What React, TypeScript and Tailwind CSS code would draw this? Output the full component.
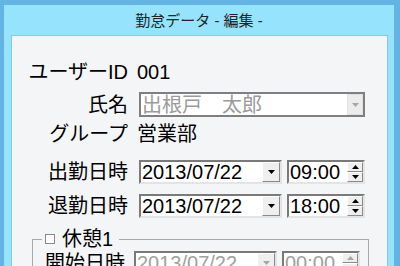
import React from 'react';

const FONT = { fontFamily: '"Liberation Sans", "Noto Sans CJK JP", sans-serif' };

interface BoxProps {
  value: string;
  disabled?: boolean;
  className?: string;
}

const Triangle: React.FC<{ up?: boolean; grey?: boolean }> = ({ up, grey }) => (
  <svg width="7" height="4" viewBox="0 0 7 4">
    <path d={up ? 'M0 4 L3.5 0 L7 4 Z' : 'M0 0 L7 0 L3.5 4 Z'} fill={grey ? '#a6a6a6' : '#000'} />
  </svg>
);

const DateBox: React.FC<BoxProps> = ({ value, disabled }) => (
  <div className="flex items-center w-[143px] h-[24px] bg-white border-2 border-t-[#7a7a7a] border-l-[#7a7a7a] border-b-[#e4e4e4] border-r-[#e4e4e4]">
    <span className={`flex-1 pl-[1px] text-[20px] leading-[20px] ${disabled ? 'text-[#a0a0a0]' : 'text-black'}`}>{value}</span>
    <div className="w-[18px] h-[20px] flex items-center justify-center bg-[#efefef] border border-t-white border-l-white border-b-[#8a8a8a] border-r-[#8a8a8a]">
      <Triangle grey={disabled} />
    </div>
  </div>
);

const TimeBox: React.FC<BoxProps> = ({ value, disabled }) => (
  <div className="flex items-center w-[78px] h-[24px] bg-white border-2 border-t-[#7a7a7a] border-l-[#7a7a7a] border-b-[#e4e4e4] border-r-[#e4e4e4]">
    <span className={`flex-1 pl-[1px] text-[20px] leading-[20px] ${disabled ? 'text-[#a0a0a0]' : 'text-black'}`}>{value}</span>
    <div className="w-[16px] h-[20px] flex flex-col">
      <div className="h-[10px] flex items-center justify-center bg-[#efefef] border border-t-white border-l-white border-b-[#8a8a8a] border-r-[#8a8a8a]">
        <Triangle up grey={disabled} />
      </div>
      <div className="h-[10px] flex items-center justify-center bg-[#efefef] border border-t-white border-l-white border-b-[#8a8a8a] border-r-[#8a8a8a]">
        <Triangle grey={disabled} />
      </div>
    </div>
  </div>
);

const Label: React.FC<{ children: React.ReactNode }> = ({ children }) => (
  <div className="w-[116px] text-right text-[20px] leading-[24px] text-black whitespace-nowrap">{children}</div>
);

export default function App() {
  return (
    <div className="w-[400px] h-[266px] overflow-hidden bg-[#63b3e5] pt-[5px] pl-[4px] pr-[6px]" style={FONT}>
      <div className="h-[261px] bg-[#95e3fd] flex flex-col">
        <div className="h-[30px] shrink-0 pt-[3px] flex items-center justify-center text-[15px] text-[#222]">
          勤怠データ - 編集 -
        </div>
        <div className="flex-1 shrink-0 ml-[7px] mr-[6px] bg-[#f4f5f7] border border-[#8cc6dc] pt-[24px] flex flex-col">
          <div className="flex items-center gap-[9px] h-[24px]">
            <Label>ユーザーID</Label>
            <span className="text-[20px] leading-[24px]">001</span>
          </div>

          <div className="flex items-center gap-[11px] h-[25px] mt-[8px]">
            <Label>氏名</Label>
            <div className="flex items-center w-[226px] h-[25px] bg-white border-2 border-[#7f7f7f]">
              <span className="flex-1 pl-[1px] text-[20px] leading-[20px] text-[#9a9a9a]">出根戸　太郎</span>
              <div className="w-[16px] h-[21px] flex items-center justify-center bg-[#ececec] border border-[#e0e0e0]">
                <Triangle grey />
              </div>
            </div>
          </div>

          <div className="flex items-center gap-[9px] h-[24px] mt-[5px]">
            <Label>グループ</Label>
            <span className="text-[20px] leading-[24px]">営業部</span>
          </div>

          <div className="flex items-center gap-[11px] mt-[14px]">
            <Label>出勤日時</Label>
            <div className="flex gap-[5px]">
              <DateBox value="2013/07/22" />
              <TimeBox value="09:00" />
            </div>
          </div>

          <div className="flex items-center gap-[11px] mt-[10px]">
            <Label>退勤日時</Label>
            <div className="flex gap-[5px]">
              <DateBox value="2013/07/22" />
              <TimeBox value="18:00" />
            </div>
          </div>

          <fieldset className="mt-[9px] ml-[20px] w-[337px] border border-[#a9a9a9] pl-[12px]">
            <legend className="-ml-[3px] pl-[3px] pr-[6px] flex items-center gap-[7px] text-[20px] leading-[24px]">
              <span className="w-[10px] h-[10px] bg-white border border-[#8a8a8a]"></span>
              <span>休憩1</span>
            </legend>
            <div className="flex items-center gap-[11px]">
              <div className="w-[80px] text-[20px] leading-[24px] text-black whitespace-nowrap">開始日時</div>
              <div className="flex gap-[5px] -ml-[2px]">
                <DateBox value="2013/07/22" disabled />
                <TimeBox value="00:00" disabled />
              </div>
            </div>
          </fieldset>
        </div>
      </div>
    </div>
  );
}
